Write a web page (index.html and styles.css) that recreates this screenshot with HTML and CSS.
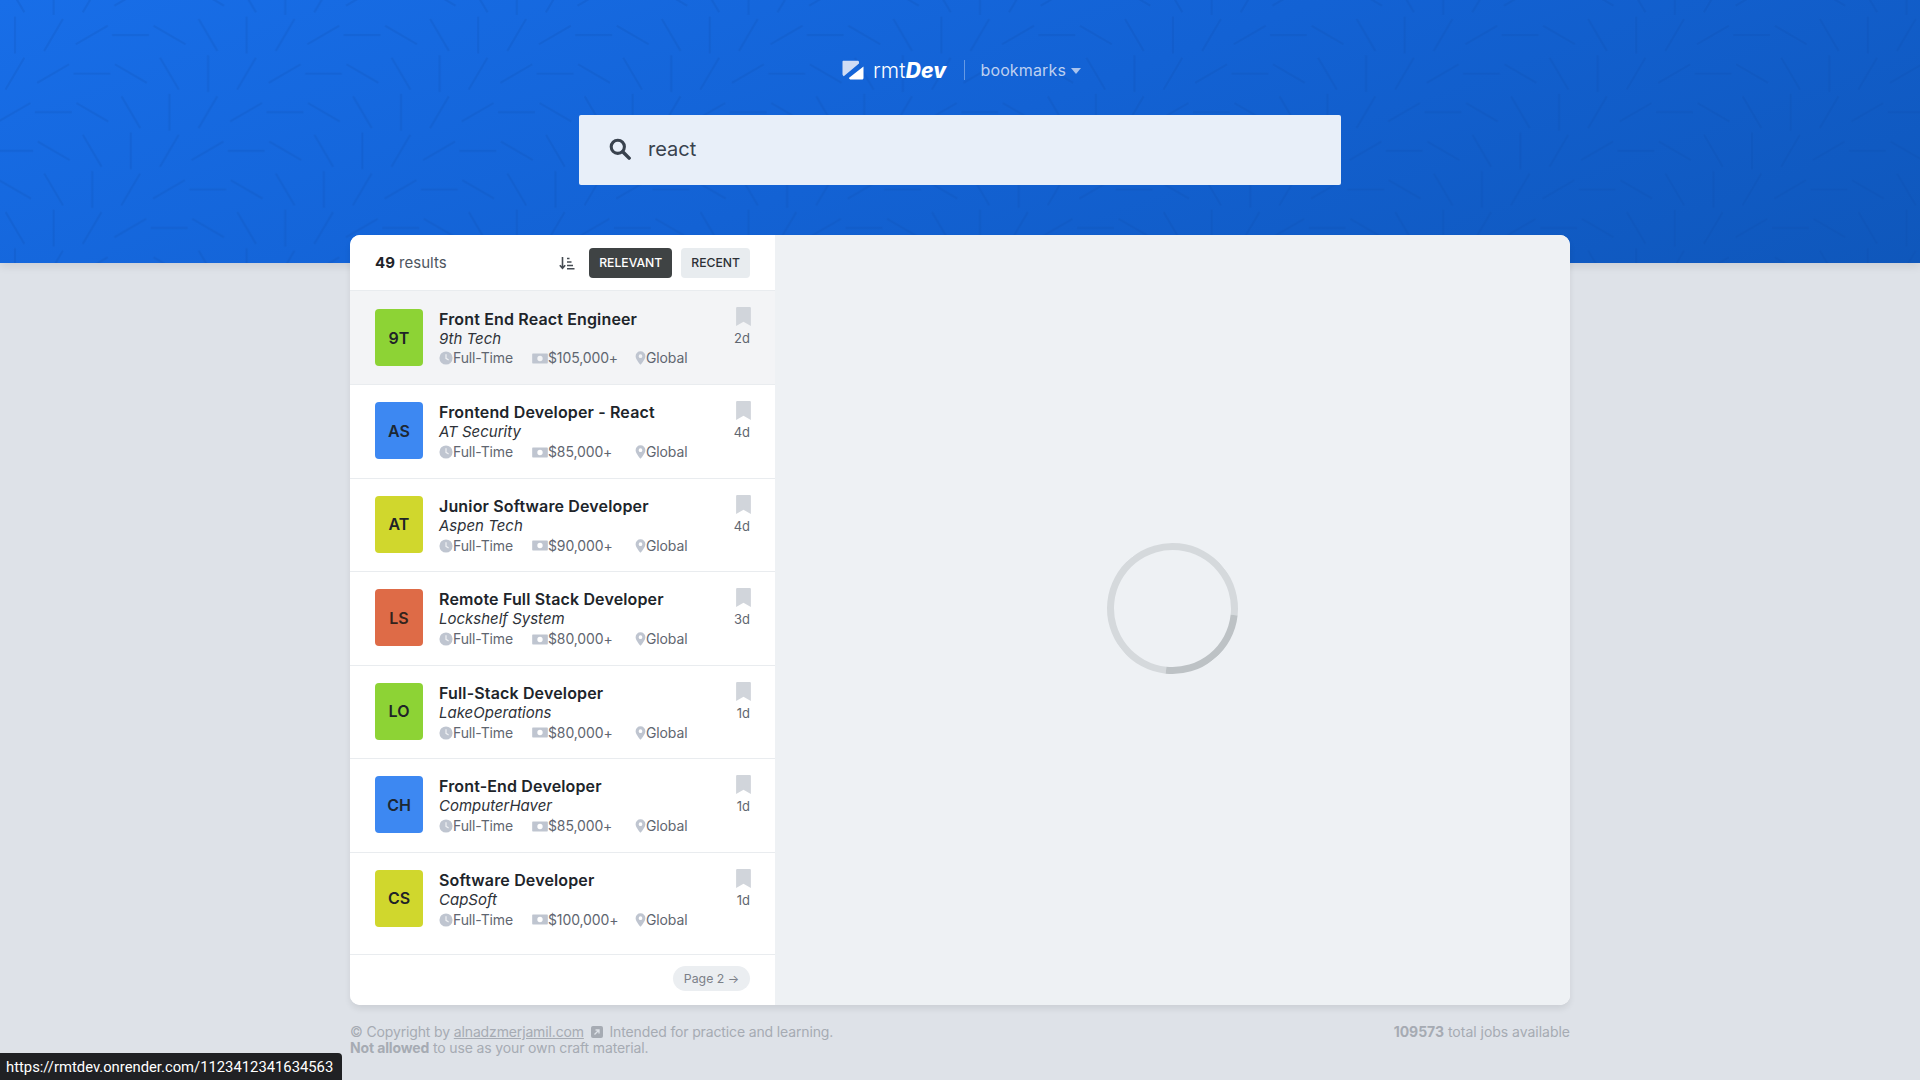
FILE: index.html

```html
<!DOCTYPE html>
<html lang="en">
<head>
  <meta charset="UTF-8" />
  <title>rmtDev</title>
  <link rel="stylesheet" href="styles.css">
</head>
<body>
  <svg class="icon-defs" width="0" height="0" aria-hidden="true">
    <defs>
      <symbol id="i-clock" viewBox="0 0 16 16">
        <circle cx="8" cy="8" r="7.5" fill="currentColor"/>
        <path d="M8 3.8V8.4l3 1.8" fill="none" stroke="#fff" stroke-opacity=".75" stroke-width="1.4"/>
      </symbol>
      <symbol id="i-money" viewBox="0 0 18 14">
        <path fill-rule="evenodd" fill="currentColor" d="M1 1.5h16a.8.8 0 0 1 .8.8v9.4a.8.8 0 0 1-.8.8H1a.8.8 0 0 1-.8-.8V2.300a.8.8 0 0 1 .8-.8zM9 4a3 3 0 1 0 0 6 3 3 0 0 0 0-6z"/>
      </symbol>
      <symbol id="i-pin" viewBox="0 0 12 16">
        <path fill-rule="evenodd" fill="currentColor" d="M6 .3a5.600 5.600 0 0 1 5.600 5.600C11.600 9.500 6 15.700 6 15.700S.4 9.500.4 5.900A5.600 5.600 0 0 1 6 .3zM6 3.800a2.100 2.100 0 1 0 0 4.200 2.100 2.100 0 0 0 0-4.200z"/>
      </symbol>
      <symbol id="i-bookmark" viewBox="0 0 14 18">
        <path fill="currentColor" d="M1 0h12a1 1 0 0 1 1 1v17l-7-4-7 4V1a1 1 0 0 1 1-1z"/>
      </symbol>
      <g id="pat-cell">
        <path d="M15 16.500v37"/>
        <path d="M62.900 19 44.100 51"/>
        <path d="M107.700 25.700 75.700 44.300"/>
        <path d="M112 35h37"/>
        <path d="M153.500 25.700 185.500 44.300"/>
        <path d="M198.600 19 217.400 51"/>
      </g>
      <g id="pat-row" fill="none" stroke="#0b4aa6" stroke-opacity=".18" stroke-width="2.200">
        <use href="#pat-cell" x="-231.600"/>
        <use href="#pat-cell"/>
        <use href="#pat-cell" x="231.600"/>
      </g>
      <pattern id="pat" width="231.600" height="231.600" patternUnits="userSpaceOnUse">
        <use href="#pat-row" y="-38.600" x="38.600"/>
        <use href="#pat-row"/>
        <use href="#pat-row" y="38.600" x="-38.600"/>
        <use href="#pat-row" y="77.200" x="-77.200"/>
        <use href="#pat-row" y="115.800" x="-115.800"/>
        <use href="#pat-row" y="154.400" x="-154.400"/>
        <use href="#pat-row" y="193" x="-193"/>
      </pattern>
    </defs>
  </svg>

  <header class="header">
    <svg class="header-pattern" aria-hidden="true"><rect width="100%" height="100%" fill="url(#pat)"/></svg>
    <div class="top-row">
      <a class="logo" href="#">
        <svg class="logo-icon" width="22" height="20" viewBox="0 0 22 20">
          <path fill="#cfdcf5" d="M1.500 .7h13.800c1 0 1.700 .5 1.700 1.200v1.700L1.800 16.300C1 15.800 .5 15 .5 14V1.700c0-.6 .4-1 1-1z"/>
          <path fill="#fff" d="M21.500 6.600V18c0 .9-.6 1.500-1.500 1.500H9c-1.300 0-1.700-.9-2.200-1.600z"/>
        </svg>
        <span class="logo-text">rmt<b>Dev</b></span>
      </a>
      <span class="top-divider"></span>
      <button class="bookmarks-btn">bookmarks <span class="caret"></span></button>
    </div>
    <form class="search">
      <svg class="search-icon" width="22" height="22" viewBox="0 0 20 20">
        <circle cx="8" cy="8" r="6" fill="none" stroke="#39424e" stroke-width="2.800"/>
        <path d="M12.500 12.500 18.300 18.300" stroke="#39424e" stroke-width="3.200" stroke-linecap="round"/>
      </svg>
      <span class="search-value">react</span>
    </form>
  </header>

  <main class="container">
    <section class="sidebar">
      <div class="sidebar-top">
        <p class="count"><b>49</b> results</p>
        <div class="sorting">
          <svg class="sort-icon" width="16" height="14" viewBox="0 0 16 14">
            <path d="M3.500 1v11M.8 9.300l2.700 3 2.700-3" fill="none" stroke="#454b52" stroke-width="1.600"/>
            <path d="M8 2.500h2.500M8 6h4.500M8 9.500h6M8 12.800h7.500" fill="none" stroke="#454b52" stroke-width="1.400"/>
          </svg>
          <button class="sort-btn sort-btn--active">RELEVANT</button>
          <button class="sort-btn">RECENT</button>
        </div>
      </div>

      <ul class="job-list">
        <li class="job job--active">
          <div class="badge badge-green">9T</div>
          <div class="job-middle">
            <h3>Front End React Engineer</h3>
            <p class="company">9th Tech</p>
            <div class="extras">
              <span class="extra extra-time"><svg class="ico-clock"><use href="#i-clock"/></svg>Full-Time</span>
              <span class="extra extra-pay"><svg class="ico-money"><use href="#i-money"/></svg>$105,000+</span>
              <span class="extra"><svg class="ico-pin"><use href="#i-pin"/></svg>Global</span>
            </div>
          </div>
          <div class="job-right"><svg class="ico-bookmark"><use href="#i-bookmark"/></svg><time>2d</time></div>
        </li>
        <li class="job">
          <div class="badge badge-blue">AS</div>
          <div class="job-middle">
            <h3>Frontend Developer - React</h3>
            <p class="company">AT Security</p>
            <div class="extras">
              <span class="extra extra-time"><svg class="ico-clock"><use href="#i-clock"/></svg>Full-Time</span>
              <span class="extra extra-pay"><svg class="ico-money"><use href="#i-money"/></svg>$85,000+</span>
              <span class="extra"><svg class="ico-pin"><use href="#i-pin"/></svg>Global</span>
            </div>
          </div>
          <div class="job-right"><svg class="ico-bookmark"><use href="#i-bookmark"/></svg><time>4d</time></div>
        </li>
        <li class="job">
          <div class="badge badge-yellow">AT</div>
          <div class="job-middle">
            <h3>Junior Software Developer</h3>
            <p class="company">Aspen Tech</p>
            <div class="extras">
              <span class="extra extra-time"><svg class="ico-clock"><use href="#i-clock"/></svg>Full-Time</span>
              <span class="extra extra-pay"><svg class="ico-money"><use href="#i-money"/></svg>$90,000+</span>
              <span class="extra"><svg class="ico-pin"><use href="#i-pin"/></svg>Global</span>
            </div>
          </div>
          <div class="job-right"><svg class="ico-bookmark"><use href="#i-bookmark"/></svg><time>4d</time></div>
        </li>
        <li class="job">
          <div class="badge badge-orange">LS</div>
          <div class="job-middle">
            <h3>Remote Full Stack Developer</h3>
            <p class="company">Lockshelf System</p>
            <div class="extras">
              <span class="extra extra-time"><svg class="ico-clock"><use href="#i-clock"/></svg>Full-Time</span>
              <span class="extra extra-pay"><svg class="ico-money"><use href="#i-money"/></svg>$80,000+</span>
              <span class="extra"><svg class="ico-pin"><use href="#i-pin"/></svg>Global</span>
            </div>
          </div>
          <div class="job-right"><svg class="ico-bookmark"><use href="#i-bookmark"/></svg><time>3d</time></div>
        </li>
        <li class="job">
          <div class="badge badge-green">LO</div>
          <div class="job-middle">
            <h3>Full-Stack Developer</h3>
            <p class="company">LakeOperations</p>
            <div class="extras">
              <span class="extra extra-time"><svg class="ico-clock"><use href="#i-clock"/></svg>Full-Time</span>
              <span class="extra extra-pay"><svg class="ico-money"><use href="#i-money"/></svg>$80,000+</span>
              <span class="extra"><svg class="ico-pin"><use href="#i-pin"/></svg>Global</span>
            </div>
          </div>
          <div class="job-right"><svg class="ico-bookmark"><use href="#i-bookmark"/></svg><time>1d</time></div>
        </li>
        <li class="job">
          <div class="badge badge-blue">CH</div>
          <div class="job-middle">
            <h3>Front-End Developer</h3>
            <p class="company">ComputerHaver</p>
            <div class="extras">
              <span class="extra extra-time"><svg class="ico-clock"><use href="#i-clock"/></svg>Full-Time</span>
              <span class="extra extra-pay"><svg class="ico-money"><use href="#i-money"/></svg>$85,000+</span>
              <span class="extra"><svg class="ico-pin"><use href="#i-pin"/></svg>Global</span>
            </div>
          </div>
          <div class="job-right"><svg class="ico-bookmark"><use href="#i-bookmark"/></svg><time>1d</time></div>
        </li>
        <li class="job">
          <div class="badge badge-yellow">CS</div>
          <div class="job-middle">
            <h3>Software Developer</h3>
            <p class="company">CapSoft</p>
            <div class="extras">
              <span class="extra extra-time"><svg class="ico-clock"><use href="#i-clock"/></svg>Full-Time</span>
              <span class="extra extra-pay"><svg class="ico-money"><use href="#i-money"/></svg>$100,000+</span>
              <span class="extra"><svg class="ico-pin"><use href="#i-pin"/></svg>Global</span>
            </div>
          </div>
          <div class="job-right"><svg class="ico-bookmark"><use href="#i-bookmark"/></svg><time>1d</time></div>
        </li>
      </ul>

      <div class="pagination">
        <button class="page-btn">Page 2 <span class="page-arrow">&rarr;</span></button>
      </div>
    </section>

    <section class="details">
      <div class="spinner"></div>
    </section>
  </main>

  <footer class="footer">
    <p>
      &copy; Copyright by <a href="#">alnadzmerjamil.com</a>
      <svg class="ext-icon" width="12" height="12" viewBox="0 0 12 12"><rect width="12" height="12" rx="2" fill="#a6abb3"/><path d="M3.500 8.500 7.500 4.500M4.500 4h3.500v3.500" fill="none" stroke="#dee2e8" stroke-width="1.300"/></svg>
      Intended for practice and learning.<br>
      <b>Not allowed</b> to use as your own craft material.
    </p>
    <p class="jobs-total"><b>109573</b> total jobs available</p>
  </footer>

  <div class="status-bar">https://rmtdev.onrender.com/1123412341634563</div>
</body>
</html>
```

FILE: styles.css

```css
* { margin: 0; padding: 0; box-sizing: border-box; }
html, body { height: 100%; overflow: hidden; }
body { font-family: Inter, "Liberation Sans", sans-serif; background: #dee2e8; color: #1f2328; }
ul { list-style: none; }
button { font-family: inherit; border: none; cursor: pointer; }
a { color: inherit; }
.icon-defs { display: block; }

/* header */
.header { position: relative; height: 263px; padding-top: 57px; display: flex; flex-direction: column; align-items: center; background: linear-gradient(160deg, #186ee8 0%, #1362d4 50%, #0f57bb 100%); box-shadow: 0 4px 8px rgba(0,0,0,0.08); overflow: hidden; }
.header-pattern { position: absolute; top: 0; left: 0; width: 100%; height: 100%; }
.top-row { position: relative; height: 26px; margin-left: 3px; display: flex; align-items: center; }
.logo { display: flex; align-items: center; gap: 9px; color: #fff; text-decoration: none; }
.logo-icon { display: block; }
.logo-text { font-size: 21px; font-weight: 300; letter-spacing: 0.15px; }
.logo-text b { font-weight: 800; font-style: italic; }
.top-divider { width: 1px; height: 20px; margin: 0 15px 0 18px; background: rgba(255,255,255,0.35); }
.bookmarks-btn { display: flex; align-items: center; gap: 5px; background: none; color: #bdd0f1; font-size: 16px; letter-spacing: 0.15px; }
.caret { width: 0; height: 0; margin-top: 2px; border-left: 5px solid transparent; border-right: 5px solid transparent; border-top: 6px solid #a9c3ee; }
.search { position: relative; width: 762px; height: 70px; margin-top: 32px; padding-left: 30px; display: flex; align-items: center; gap: 17px; background: #e8eff9; border-radius: 2px; }
.search-icon { margin-bottom: 3px; }
.search-value { font-size: 20px; color: #39424e; margin-bottom: 2px; }

/* main box */
.container { position: relative; width: 1220px; height: 770px; margin: -28px auto 0; display: flex; background: #fff; border-radius: 10px; box-shadow: 0 4px 6px rgba(0,0,0,0.08); overflow: hidden; }
.sidebar { width: 425px; display: flex; flex-direction: column; background: #fff; }
.details { flex: 1; display: flex; align-items: center; justify-content: center; background: #eef1f4; padding-bottom: 23px; }
.spinner { width: 131px; height: 131px; border: 7px solid #d5d9dc; border-right-color: #bdc2c5; border-radius: 50%; transform: rotate(51deg); }

.sidebar-top { height: 56px; padding: 0 25px; display: flex; align-items: center; justify-content: space-between; border-bottom: 1px solid #e9ecef; }
.count { font-size: 15px; color: #4d5560; }
.count b { font-weight: 700; color: #1f2328; }
.sorting { display: flex; align-items: center; gap: 9px; }
.sort-icon { margin-right: 5px; }
.sort-btn { height: 30px; padding: 0 10px; font-size: 12.200px; font-weight: 500; color: #2c3036; background: #e8ecef; border-radius: 4px; }
.sort-btn--active { color: #fff; background: #3f4344; }

.job-list { height: 664px; overflow: hidden; border-bottom: 1px solid #e9ecef; }
.job { height: 93.500px; padding: 17px 25px 0; display: flex; border-bottom: 1px solid #e9ecef; }
.job:last-child { border-bottom: none; }
.job--active { background: #f3f4f6; height: 94px; padding-top: 18px; }
.badge { width: 48px; height: 57px; display: flex; align-items: center; justify-content: center; font-size: 16px; font-weight: 600; color: #1f2328; border-radius: 4px; flex-shrink: 0; }
.badge-green { background: #8dd335; }
.badge-blue { background: #3d88f2; color: #1c2733; }
.badge-yellow { background: #d0d72d; }
.badge-orange { background: #de6b47; color: #33231c; }
.job-middle { margin-left: 16px; flex: 1; min-width: 0; }
.job-middle h3 { font-size: 16px; font-weight: 600; line-height: 20px; letter-spacing: 0.15px; color: #20242a; }
.company { font-size: 15px; font-style: italic; line-height: 19px; color: #2e3238; }
.extras { display: flex; margin-top: 1px; font-size: 14px; line-height: 20px; letter-spacing: -0.12px; color: #5f6670; }
.job--active .extras { margin-top: 0; }
.extra { display: flex; align-items: center; }
.extra svg { display: block; color: #bfc5d0; flex-shrink: 0; }
.extra-time { width: 93px; }
.extra-pay { width: 103px; }
.ico-clock { width: 14px; height: 14px; }
.ico-money { width: 16px; height: 13px; }
.ico-pin { width: 11px; height: 14px; }
.job-right { width: 40px; display: flex; flex-direction: column; align-items: flex-end; margin-top: -1px; }
.job--active .job-right { margin-top: -2px; }
.ico-bookmark { display: block; width: 15px; height: 19px; margin-right: -1px; color: #d1d5db; }
.job-right time { margin-top: 4px; font-size: 13px; line-height: 16px; color: #5f6670; }

.pagination { flex: 1; padding: 11px 25px 0; display: flex; justify-content: flex-end; align-items: flex-start; }
.page-btn { height: 25px; width: 77px; font-size: 12.300px; color: #7b8088; background: #ebeef1; border-radius: 13px; white-space: nowrap; }
.page-arrow { font-size: 12px; }

/* footer */
.footer { width: 1220px; margin: 19px auto 0; display: flex; justify-content: space-between; font-size: 14px; line-height: 16px; letter-spacing: -0.14px; color: #a6abb3; }
.footer b { font-weight: 700; }
.jobs-total { letter-spacing: -0.02px; }
.ext-icon { vertical-align: -1px; margin: 0 3px; }

.status-bar { position: fixed; left: 0; bottom: 0; width: 342px; height: 27px; padding-left: 6px; font-family: Roboto, "Liberation Sans", sans-serif; font-size: 14.800px; line-height: 28px; color: #fff; background: #202124; border-top-right-radius: 4px; white-space: nowrap; overflow: hidden; }
```
